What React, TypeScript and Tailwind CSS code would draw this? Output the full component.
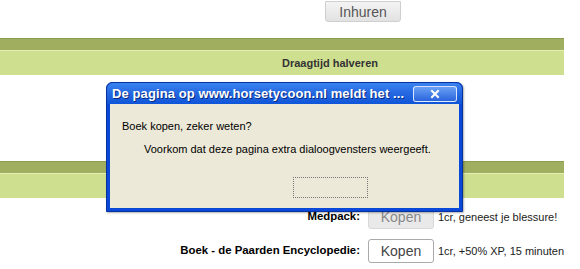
import React from "react";

function Band({ label }: { label?: string }) {
  return (
    <div className="w-[564px]">
      <div className="h-[12px] bg-[#9fae5f] border-t border-[#8c9c50]" />
      <div className="h-[1px] bg-[#e4efb8]" />
      <div className="h-[24px] bg-[#cfdf90] flex items-center">
        {label && (
          <span className="pl-[282px] text-[11px] font-bold text-[#333]">{label}</span>
        )}
      </div>
    </div>
  );
}

function Row({ name, info, disabled }: { name: string; info: string; disabled?: boolean }) {
  return (
    <div className="flex items-center h-[34px]">
      <div className="w-[368px] text-right text-[11.4px] font-bold text-black pr-[8px]">{name}</div>
      <button
        className={
          "w-[66px] h-[24px] rounded-[3px] text-[14px] " +
          (disabled
            ? "bg-[#e9e9e9] border border-[#d8d8d8] text-[#888]"
            : "bg-white border border-[#aaa] text-[#444]")
        }
      >
        Kopen
      </button>
      <span className="pl-[4px] text-[11px] text-[#222]">{info}</span>
    </div>
  );
}

function Dialog() {
  return (
    <div className="absolute left-[106px] top-[82px] w-[357px] h-[130px] bg-[#0a49d8] rounded-t-[6px] border border-[#0831a0] flex flex-col shadow-[1px_1px_2px_rgba(0,0,0,0.3)]">
      <div className="h-[21px] flex items-center justify-between px-[5px] rounded-t-[6px] bg-gradient-to-b from-[#3a83f1] via-[#2467e0] to-[#0e55d8]">
        <span className="text-white font-bold text-[13px] tracking-[0.1px] [text-shadow:1px_1px_0_#0a2a80]">
          De pagina op www.horsetycoon.nl meldt het ...
        </span>
        <div className="w-[44px] h-[16px] mt-[1px] rounded-[3px] border border-white/80 bg-gradient-to-b from-[#6aa0f5] to-[#2a64dc] flex items-center justify-center">
          <svg width="10" height="10" viewBox="0 0 10 10">
            <path d="M2 2 L8 8 M8 2 L2 8" stroke="white" strokeWidth="2" strokeLinecap="square" />
          </svg>
        </div>
      </div>
      <div className="flex-1 mx-[3px] mb-[3px] bg-[#ece9d8] text-[11px] text-black flex flex-col">
        <div className="pl-[12px] pt-[14px]">Boek kopen, zeker weten?</div>
        <div className="pl-[34px] pt-[6px]">Voorkom dat deze pagina extra dialoogvensters weergeeft.</div>
        <div className="pl-[183px] pt-[20px]">
          <div className="w-[75px] h-[21px] border border-dotted border-[#777]" />
        </div>
      </div>
    </div>
  );
}

export default function App() {
  return (
    <div
      className="relative w-[580px] h-[269px] bg-white overflow-hidden"
      style={{ fontFamily: '"Liberation Sans", Arial, sans-serif' }}
    >
      <div className="h-[38px] pl-[325px]">
        <button className="w-[76px] h-[21px] -mt-[2px] rounded-b-[3px] bg-gradient-to-b from-[#f4f4f4] to-[#e2e2e2] border border-[#cfcfcf] text-[14px] text-[#555]">
          Inhuren
        </button>
      </div>
      <Band label="Draagtijd halveren" />
      <div className="h-[86px]" />
      <Band />
      <div className="pt-[2px]">
        <Row name="Medpack:" info="1cr, geneest je blessure!" disabled />
        <Row name="Boek - de Paarden Encyclopedie:" info="1cr, +50% XP, 15 minuten" />
      </div>
      <Dialog />
    </div>
  );
}
